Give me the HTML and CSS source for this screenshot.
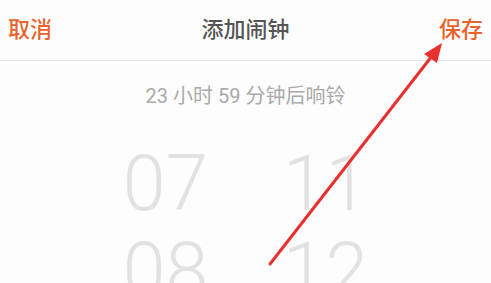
FILE: index.html
```html
<!DOCTYPE html>
<html lang="zh-CN">
  <head>
    <meta charset="UTF-8" />
    <meta name="viewport" content="width=device-width, initial-scale=1.0" />
    <title>添加闹钟</title>
    <link rel="stylesheet" href="styles.css">
  </head>
  <body>
    <div class="page">
      <div class="header">
        <span class="btn">取消</span>
        <span class="title">添加闹钟</span>
        <span class="btn">保存</span>
      </div>
      <div class="hint">23 小时 59 分钟后响铃</div>
      <div class="picker">
        <div class="col">
          <span>07</span>
          <span>08</span>
        </div>
        <div class="col">
          <span>11</span>
          <span>12</span>
        </div>
      </div>
      <!-- 标注箭头 -->
      <svg class="arrow" width="491" height="283" viewBox="0 0 491 283">
        <line x1="270" y1="264" x2="432" y2="56" stroke="#e8302f" stroke-width="3" stroke-linecap="round" />
        <polygon points="442,43 424,54 437,63" fill="#e8302f" />
      </svg>
    </div>
  </body>
</html>
```

FILE: styles.css
```css
* {
  padding: 0;
  margin: 0;
}
body {
  background: #fdfdfd;
  font-family: 'Noto Sans CJK SC', 'Noto Sans', sans-serif;
  overflow: hidden;
}
.page {
  width: 491px;
  height: 283px;
  position: relative;
  overflow: hidden;
}
.header {
  display: flex;
  align-items: center;
  justify-content: space-between;
  padding: 0 8px;
  border-bottom: 1px solid #e4e4e4;
  box-sizing: border-box;
  margin-top: -6px;
  height: 67px;
}
.btn {
  color: #e8642e;
  font-size: 22px;
  font-weight: 500;
}
.title {
  color: #555;
  font-size: 22px;
  font-weight: 500;
}
.hint {
  text-align: center;
  color: #aaa;
  font-size: 20px;
  margin-top: 22px;
  line-height: 26px;
  font-family: Roboto, 'Noto Sans CJK SC', sans-serif;
}
.picker {
  display: flex;
  justify-content: center;
  margin-top: 32px;
}
.col {
  width: 160px;
  display: flex;
  flex-direction: column;
  align-items: center;
}
.col span {
  font-family: Roboto, sans-serif;
  font-weight: 300;
  font-size: 77px;
  line-height: 87px;
  color: #e2e2e2;
}
.arrow {
  position: absolute;
  left: 0;
  top: 0;
}
```
